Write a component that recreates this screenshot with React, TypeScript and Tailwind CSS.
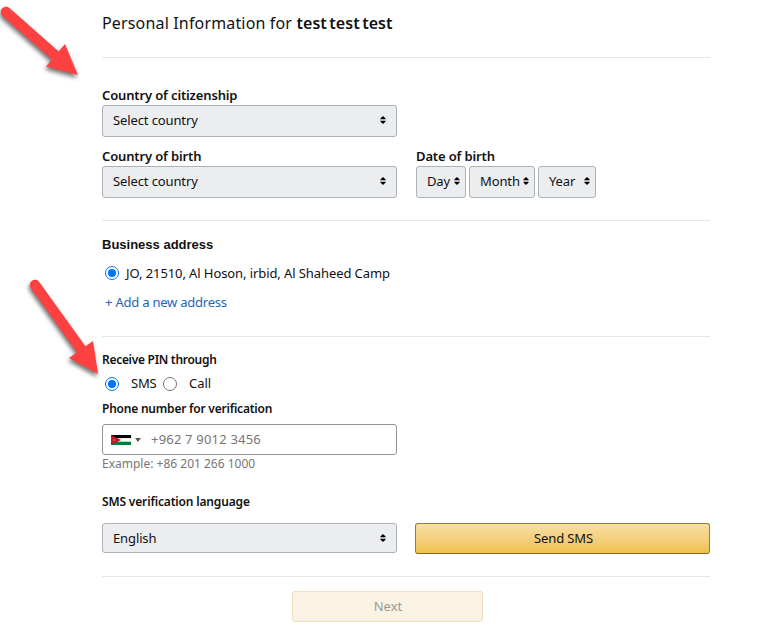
import React, { useState } from 'react'

interface SelectProps {
 label: string
 className?: string
}

function SelectBox({ label, className = '' }: SelectProps) {
 return (
  <button
   className={`flex items-center justify-between rounded-[3px] border border-[#adb1b8] bg-[#ecedef] pl-2.5 text-[13px] tracking-[-0.12px] text-[#111] ${className}`}
  >
   <span>{label}</span>
   <svg width="6" height="8" viewBox="0 0 6 8" fill="#000" className="mb-0.5 shrink-0">
    <path d="M3 0L5.600 2.400V3.200H0.400V2.400zM3 8L0.400 5.600V4.800H5.600V5.600z" />
   </svg>
  </button>
 )
}

function Radio({ checked, onChange }: { checked: boolean; onChange: () => void }) {
 return (
  <button
   role="radio"
   aria-checked={checked}
   onClick={onChange}
   className={`flex size-3.5 shrink-0 items-center justify-center rounded-full border bg-white ${
    checked ? 'border-[#0075ff]' : 'border-[#767676]'
   }`}
  >
   {checked && <span className="size-2 rounded-full bg-[#0075ff]" />}
  </button>
 )
}

function JordanFlag() {
 return (
  <svg width="20" height="10" viewBox="0 0 20 10">
   <path fill="#000" d="M0 0h20v3.33H0z" />
   <path fill="#fff" d="M0 3.33h20v3.34H0z" />
   <path fill="#0b7a3c" d="M0 6.67h20V10H0z" />
   <path fill="#ce1126" d="M0 0l10 5L0 10z" />
   <circle cx="3" cy="5" r="0.7" fill="#f3b9bf" />
  </svg>
 )
}

export default function App() {
 const [method, setMethod] = useState('sms')

 return (
  <div className="relative h-[644px] w-[763px] overflow-hidden bg-white font-['Noto_Sans','Open_Sans',sans-serif] text-[13px] text-[#111]">
   <main className="ml-[102px] w-[608px]">
    <h1 className="border-b border-[#e7e7e7] pt-[11px] pb-[22px] text-[16px] leading-6 tracking-[0.16px]">
     Personal Information for{' '}
     <b className="font-semibold tracking-[0.05px] [word-spacing:-1.8px]">test test test</b>
    </h1>

    {/* Citizenship and birth */}
    <section className="border-b border-[#e7e7e7] pt-[27px] pb-[22px]">
     <div className="leading-5 font-semibold tracking-[-0.14px]">Country of citizenship</div>
     <SelectBox label="Select country" className="h-8 w-[295px] pr-2.5" />
     <div className="mt-[9px] flex gap-[19px]">
      <div>
       <div className="leading-5 font-semibold tracking-[-0.14px]">Country of birth</div>
       <SelectBox label="Select country" className="h-8 w-[295px] pr-2.5" />
      </div>
      <div>
       <div className="leading-5 font-semibold tracking-[-0.14px]">Date of birth</div>
       <div className="flex gap-[3px]">
        <SelectBox label="Day" className="h-8 w-[50px] pr-[5px]" />
        <SelectBox label="Month" className="h-8 w-[66px] pr-[5px]" />
        <SelectBox label="Year" className="h-8 w-[58px] pr-[5px]" />
       </div>
      </div>
     </div>
    </section>

    {/* Address */}
    <section className="border-b border-[#e7e7e7] pt-3.5 pb-6">
     <div className="font-['Liberation_Sans',Arial,sans-serif] leading-5 font-bold">
      Business address
     </div>
     <div className="mt-2 flex items-center gap-[7px] pl-[3px] leading-5 tracking-[-0.09px]">
      <Radio checked onChange={() => {}} />
      <span>JO, 21510, Al Hoson, irbid, Al Shaheed Camp</span>
     </div>
     <a href="#" className="mt-[9px] block pl-[3px] leading-5 tracking-[-0.22px] text-[#1f66b5]">
      + Add a new address
     </a>
    </section>

    {/* PIN verification */}
    <section className="border-b border-[#e7e7e7] pt-[13px] pb-[22px]">
     <div className="text-[12px] leading-5 font-semibold tracking-[-0.29px]">Receive PIN through</div>
     <div className="mt-1 flex h-5 items-center pl-[3px]">
      <Radio checked={method === 'sms'} onChange={() => setMethod('sms')} />
      <span className="ml-3 w-8 tracking-[-0.2px]">SMS</span>
      <Radio checked={method === 'call'} onChange={() => setMethod('call')} />
      <span className="ml-3">Call</span>
     </div>
     <div className="mt-[5px] text-[12px] leading-5 font-semibold tracking-[-0.22px]">
      Phone number for verification
     </div>
     <div className="mt-[5px] flex h-[31px] w-[295px] items-center rounded-[3px] border border-[#949494] pl-2">
      <JordanFlag />
      <svg width="6" height="4" viewBox="0 0 6 4" className="ml-1" fill="#555">
       <path d="M0 0h6L3 4z" />
      </svg>
      <input
       placeholder="+962 7 9012 3456"
       className="ml-2.5 w-40 tracking-[0.2px] outline-none placeholder:text-[#767676]"
      />
     </div>
     <div className="text-[12px] leading-[18px] text-[#767676]">Example: +86 201 266 1000</div>
     <div className="mt-[19px] text-[12px] leading-5 font-semibold tracking-[-0.16px]">
      SMS verification language
     </div>
     <div className="mt-[11px] flex gap-[18px]">
      <SelectBox label="English" className="h-[30px] w-[295px] pt-px pr-2.5" />
      <button className="h-[31px] w-[295px] rounded-[3px] border border-[#9c7e31] border-b-[#846a29] bg-linear-to-b from-[#f7dfa5] to-[#f0c14b] pl-0.5 tracking-[-0.12px]">
       Send SMS
      </button>
     </div>
    </section>

    <button
     disabled
     className="mt-[14px] ml-[190px] block h-[31px] w-[191px] rounded-[3px] border border-[#ecdfc0] bg-[#faf3e4] pl-px text-[#999]"
    >
     Next
    </button>
   </main>

   {/* Pointer arrows */}
   <svg
    className="pointer-events-none absolute inset-0 drop-shadow-[-1px_3px_2px_rgba(0,0,0,0.55)]"
    width="110"
    height="400"
    viewBox="0 0 110 400"
    fill="#fd4141"
   >
    <path d="M6 12L57 57" stroke="#fd4141" strokeWidth="10.5" strokeLinecap="round" />
    <path d="M78 75L65 44L46 66.500Z" />
    <path d="M35 285L81 349" stroke="#fd4141" strokeWidth="10.500" strokeLinecap="round" />
    <path d="M98 374L93 341L69 358Z" />
   </svg>
  </div>
 )
}
